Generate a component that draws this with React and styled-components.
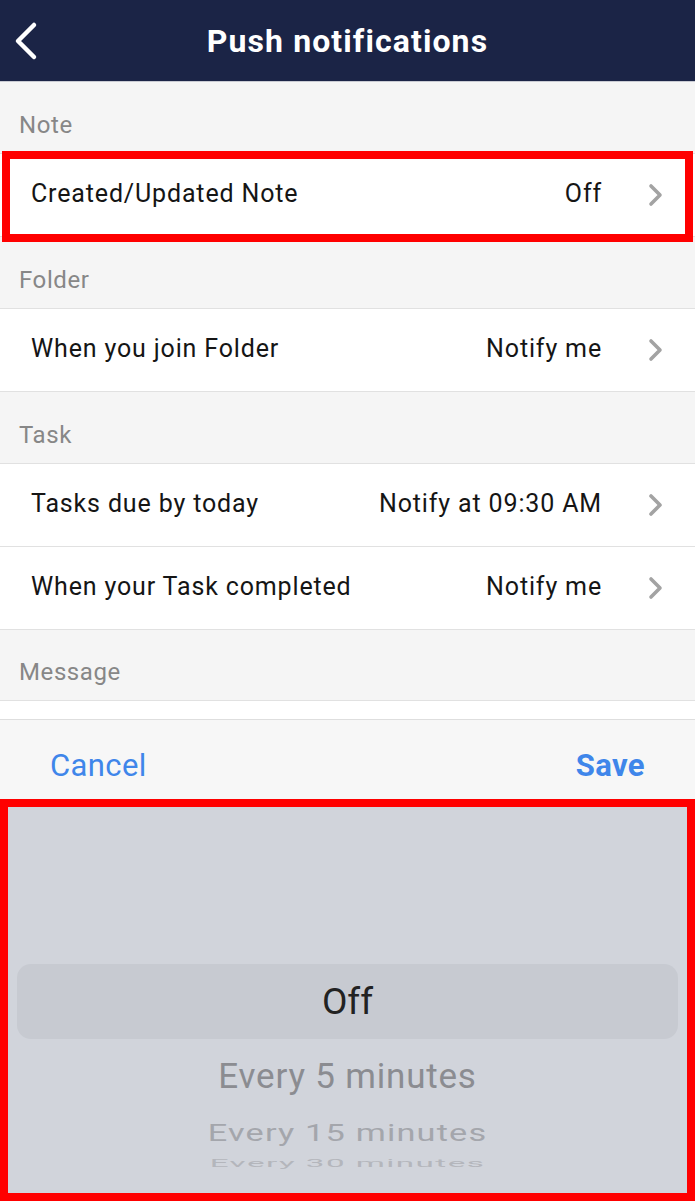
import React from "react";
import styled, { createGlobalStyle } from "styled-components";

const GlobalStyle = createGlobalStyle`
  html, body {
    margin: 0;
    padding: 0;
    background: #f5f5f5;
  }
  body {
    font-family: Roboto, "Liberation Sans", Arial, sans-serif;
    -webkit-font-smoothing: antialiased;
  }
`;

const Screen = styled.div`
  width: 695px;
  height: 1201px;
  display: flex;
  flex-direction: column;
  overflow: hidden;
  background: #f5f5f5;
`;

const Header = styled.header`
  height: 81px;
  flex-shrink: 0;
  display: grid;
  grid-template-columns: 80px 1fr 80px;
  align-items: center;
  background: #1b2446;
  border-bottom: 1px solid #c9cbd3;
`;

const BackButton = styled.button`
  background: none;
  border: 0;
  padding: 0 0 0 12px;
  height: 100%;
  display: flex;
  align-items: center;
  cursor: pointer;
`;

const Title = styled.h1`
  margin: 0;
  text-align: center;
  color: #ffffff;
  font-size: 32px;
  font-weight: 700;
  letter-spacing: 1.1px;
`;

const List = styled.div`
  flex: 1;
  overflow: hidden;
  display: flex;
  flex-direction: column;
`;

const SectionHeader = styled.div`
  height: ${({ h }) => h || 71}px;
  flex-shrink: 0;
  display: flex;
  align-items: flex-end;
  padding: 0 19px 14px;
  box-sizing: border-box;
  color: #878787;
  font-size: 24px;
  letter-spacing: 0.6px;
`;

const Group = styled.div`
  background: #ffffff;
  border-top: 1px solid #e1e1e1;
  border-bottom: 1px solid #e1e1e1;
  flex-shrink: 0;
`;

const RowWrap = styled.div`
  position: relative;
  & + & {
    border-top: 1px solid #e1e1e1;
  }
`;

const Row = styled.div`
  height: 82px;
  display: flex;
  align-items: center;
  padding: 0 31px 0 31px;
  box-sizing: border-box;
  font-size: 25px;
  color: #151515;
  letter-spacing: 0.85px;
`;

const Label = styled.span`
  flex: 1;
  margin-top: -3px;
`;

const Value = styled.span`
  margin-right: 46px;
  margin-top: -3px;
`;

const Highlight = styled.div`
  position: absolute;
  top: ${({ t }) => t}px;
  bottom: ${({ b }) => b}px;
  left: ${({ l }) => l}px;
  right: ${({ r }) => r}px;
  border: 8px solid #ff0000;
  pointer-events: none;
`;

const Sheet = styled.div`
  flex-shrink: 0;
  height: 481px;
  display: flex;
  flex-direction: column;
  background: #f7f7f7;
  border-top: 1px solid #dedede;
`;

const Toolbar = styled.div`
  height: 79px;
  display: flex;
  align-items: center;
  justify-content: space-between;
  padding: 12px 50px 0;
  box-sizing: border-box;
`;

const ToolButton = styled.button`
  background: none;
  border: 0;
  padding: 0;
  color: #3f86ea;
  font-family: inherit;
  font-size: 31px;
  letter-spacing: 0.4px;
  font-weight: ${({ bold }) => (bold ? 700 : 400)};
  cursor: pointer;
`;

const Picker = styled.div`
  position: relative;
  flex: 1;
  background: #d1d4db;
  padding: 165px 17px 0;
`;

const Wheel = styled.div`
  height: 206px;
  overflow: hidden;
  display: flex;
  flex-direction: column;
`;

const Selected = styled.div`
  height: 75px;
  flex-shrink: 0;
  display: flex;
  align-items: center;
  justify-content: center;
  background: #c7cad1;
  border-radius: 14px;
  font-size: 37px;
  color: #222222;
`;

const Option = styled.div`
  height: ${({ h }) => h}px;
  flex-shrink: 0;
  display: flex;
  align-items: center;
  justify-content: center;
  font-size: 35px;
  color: ${({ c }) => c};
  transform: scale(${({ sx }) => sx}, ${({ sy }) => sy});
  letter-spacing: ${({ ls }) => ls}px;
`;

const BackIcon = () => (
  <svg width="28" height="40" viewBox="0 0 28 40">
    <path d="M22 4 L6 20 L22 36" fill="none" stroke="#fff" strokeWidth="4.5" strokeLinecap="round" strokeLinejoin="round" />
  </svg>
);

const Chevron = () => (
  <svg width="16" height="24" viewBox="0 0 16 24">
    <path d="M3 3 L12 12 L3 21" fill="none" stroke="#a3a3a3" strokeWidth="3.6" strokeLinecap="round" strokeLinejoin="round" />
  </svg>
);

const SettingRow = ({ label, value, highlighted }) => (
  <RowWrap>
    <Row>
      <Label>{label}</Label>
      <Value>{value}</Value>
      <Chevron />
    </Row>
    {highlighted && <Highlight t={-3} b={-6} l={2} r={2} />}
  </RowWrap>
);

const sections = [
  { title: "Note", rows: [{ label: "Created/Updated Note", value: "Off", highlighted: true }] },
  { title: "Folder", rows: [{ label: "When you join Folder", value: "Notify me" }] },
  {
    title: "Task",
    rows: [
      { label: "Tasks due by today", value: "Notify at 09:30 AM" },
      { label: "When your Task completed", value: "Notify me" }
    ]
  }
];

export default function App() {
  return (
    <>
      <GlobalStyle />
      <Screen>
        <Header>
          <BackButton>
            <BackIcon />
          </BackButton>
          <Title>Push notifications</Title>
          <span />
        </Header>
        <List>
          {sections.map(section => (
            <React.Fragment key={section.title}>
              <SectionHeader>{section.title}</SectionHeader>
              <Group>
                {section.rows.map(row => (
                  <SettingRow key={row.label} {...row} />
                ))}
              </Group>
            </React.Fragment>
          ))}
          <SectionHeader h={70}>Message</SectionHeader>
          <Group>
            <Row />
          </Group>
        </List>
        <Sheet>
          <Toolbar>
            <ToolButton>Cancel</ToolButton>
            <ToolButton bold>Save</ToolButton>
          </Toolbar>
          <Picker>
            <Wheel>
              <Selected>Off</Selected>
              <Option h={75} c="#8b8c91" sx={1} sy={1} ls={0.8}>Every 5 minutes</Option>
              <Option h={38} c="#a4a6ac" sx={0.98} sy={0.68} ls={1.2}>Every 15 minutes</Option>
              <Option h={22} c="#b4b6bc" sx={0.95} sy={0.32} ls={1.5}>Every 30 minutes</Option>
            </Wheel>
            <Highlight t={0} b={0} l={0} r={0} />
          </Picker>
        </Sheet>
      </Screen>
    </>
  );
}
